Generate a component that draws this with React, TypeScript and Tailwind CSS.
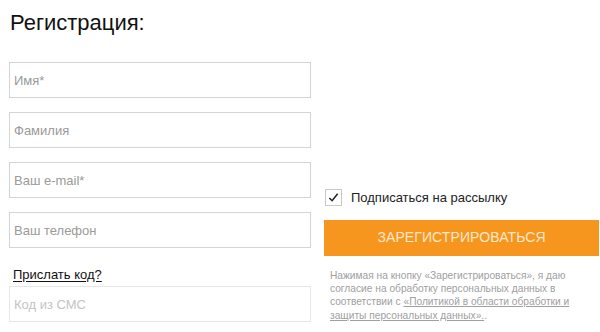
import { useState } from 'react';

const FIELDS = ['Имя*', 'Фамилия', 'Ваш e-mail*', 'Ваш телефон'];

export default function App() {
  const [subscribe, setSubscribe] = useState(true);

  return (
    <div className="w-[600px] h-[332px] overflow-hidden bg-white font-['Liberation_Sans',Arial,sans-serif]">
      <h1 className="pl-[10px] pt-[10px] text-[22px] leading-[26px] text-[#111]">Регистрация:</h1>

      <div className="flex pt-[26px]">
        {/* Left column */}
        <div className="w-[302px] ml-[9px] flex flex-col">
          <div className="flex flex-col gap-[14px]">
            {FIELDS.map((f) => (
              <input
                key={f}
                type="text"
                placeholder={f}
                className="h-[36px] w-full border border-[#d4d4d4] px-[4px] text-[13px] text-[#333] placeholder-[#9a9a9a] outline-none"
              />
            ))}
          </div>
          <a href="#" className="mt-[19px] ml-[4px] text-[13px] leading-[16px] text-[#111] underline underline-offset-2">
            Прислать код?
          </a>
          <input
            type="text"
            placeholder="Код из СМС"
            className="mt-[3px] h-[36px] w-full border border-[#e6e6e6] px-[4px] text-[13px] text-[#333] placeholder-[#c4c4c4] outline-none"
          />
        </div>

        {/* Right column */}
        <div className="ml-[13px] w-[275px] flex flex-col pt-[126px]">
          <label className="flex items-center gap-[9px] cursor-pointer">
            <button
              type="button"
              onClick={() => setSubscribe(!subscribe)}
              className="w-[17px] h-[17px] ml-[1px] border border-[#c8c8c8] flex items-center justify-center bg-white"
            >
              {subscribe && (
                <svg viewBox="0 0 12 12" className="w-[11px] h-[11px]">
                  <path d="M1.5 6.5 L4.5 9.5 L10.5 2" fill="none" stroke="#222" strokeWidth="1.7" />
                </svg>
              )}
            </button>
            <span className="text-[13px] text-[#222]">Подписаться на рассылку</span>
          </label>

          <button
            type="button"
            className="mt-[12px] h-[36px] w-full bg-[#f7961e] text-[14px] text-[#fde8cc] tracking-[0.1px]"
          >
            ЗАРЕГИСТРИРОВАТЬСЯ
          </button>

          <p className="mt-[13px] pl-[6px] pr-[22px] text-[10.2px] leading-[13.4px] text-[#a0a0a0]">
            Нажимая на кнопку «Зарегистрироваться», я даю согласие на обработку персональных данных в соответствии с{' '}
            <a href="#" className="underline">«Политикой в области обработки и защиты персональных данных».</a>.
          </p>
        </div>
      </div>
    </div>
  );
}
